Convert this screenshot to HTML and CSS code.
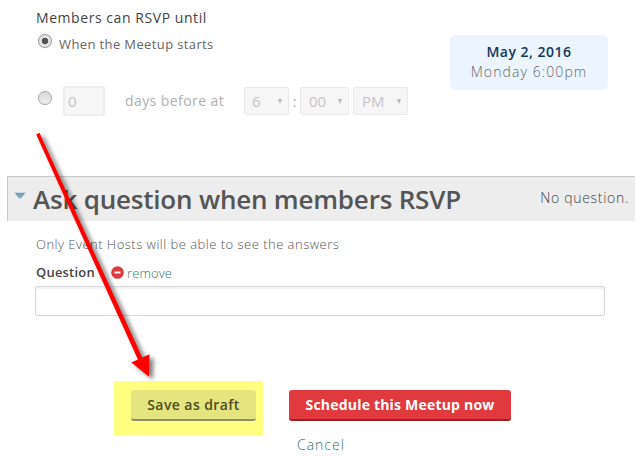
FILE: index.html
```html
<!DOCTYPE html>
<html lang="en">
<head>
<meta charset="utf-8">
<title>Schedule a Meetup</title>
<link rel="stylesheet" href="styles.css">
</head>
<body>
<main class="page">
  <section class="rsvp">
    <div class="deadline">
      <h2 class="label"><span class="t-members">Members can RSVP until</span></h2>
      <div class="option option-start"><span class="radio checked"></span><span class="t-when">When the Meetup starts</span></div>
      <div class="option option-days">
        <span class="radio"></span>
        <span class="field days">0</span>
        <span class="t-days">days before at</span>
        <span class="field hour">6<i class="caret"></i></span>
        <span class="colon">:</span>
        <span class="field minute">00<i class="caret"></i></span>
        <span class="field period">PM<i class="caret"></i></span>
      </div>
    </div>
    <aside class="date"><strong>May 2, 2016</strong><span>Monday 6:00pm</span></aside>
  </section>
  <header class="bar">
    <svg class="toggle" width="12" height="8" viewBox="0 0 12 8"><defs><linearGradient id="g" x2="0" y2="1"><stop offset="0" stop-color="#699bb9"/><stop offset="1" stop-color="#8fb3cb"/></linearGradient></defs><path d="M.5 .8h11L7 6.5H5z" fill="url(#g)"/></svg>
    <h1>Ask question when members RSVP</h1>
    <span class="status">No question.</span>
  </header>
  <section class="question">
    <p class="hint">Only Event Hosts will be able to see the answers</p>
    <div class="question-label">
      <b>Question</b>
      <svg width="13" height="13" viewBox="0 0 13 13"><circle cx="6.5" cy="6.5" r="6.3" fill="#e0393e"/><path d="M3.5 5.5h6v2h-6z" fill="#fff"/></svg>
      <a>remove</a>
    </div>
    <div class="answer"></div>
  </section>
  <footer class="actions">
    <div class="highlight"><span class="button draft">Save as draft</span></div>
    <div class="submit"><span class="button schedule">Schedule this Meetup now</span><a class="cancel">Cancel</a></div>
  </footer>
  <svg class="arrow" width="640" height="463" viewBox="0 0 640 463"><path d="M39.5 132.8L36.2 134.4L137.9 359.6L131.3 362.6L149 376.8L149.5 354.3L142.3 357.6Z" fill="#f00"/></svg>
</main>
</body>
</html>
```
FILE: styles.css
```css
* { box-sizing: border-box; }
body { margin: 0; background: #fff; color: #666; font-family: "Open Sans", "Noto Sans", sans-serif; font-size: 14px; font-weight: 300; }
h1, h2, p { margin: 0; }
.page { position: relative; width: 640px; height: 463px; overflow: hidden; white-space: nowrap; }
.rsvp { display: flex; justify-content: space-between; height: 176px; padding: 8px 32px 0 36px; }
.label { height: 20px; line-height: 20px; font-size: 14px; font-weight: 400; letter-spacing: .56px; color: #444; }
.option { display: flex; align-items: center; }
.option-start { height: 32px; }
.option-days { height: 30px; margin-top: 26px; color: #b0b0b0; font-weight: 400; }
.radio { width: 14px; height: 14px; border: 1px solid #aaa; border-radius: 50%; background: linear-gradient(#d8d8d8, #eee); box-shadow: 0 0 1px #ccc; }
.option-start .radio { margin: 0 7px 6px 2px; }
.option-days .radio { margin: 0 11px 6px 2px; }
.radio.checked { border-color: #999; background: radial-gradient(circle, #555 0 3px, #e5e5e5 3.6px); }
.t-when { font-size: 13px; font-weight: 400; letter-spacing: .38px; }
.field { display: flex; align-items: center; justify-content: space-between; height: 28px; border: 1px solid #e9e9e9; border-radius: 2px; background: #f6f6f6; color: #c4c4c4; font-size: 15px; }
.days { width: 42px; height: 30px; padding-left: 4px; margin-right: 20px; border-width: 2px; border-color: #eee; padding-left: 3px; }
.hour { width: 45px; padding: 0 6px 0 7px; }
.minute { width: 49px; padding: 0 6px 0 8px; margin-right: 4px; }
.period { width: 55px; padding: 0 6px 0 8px; }
.colon { width: 11px; text-align: center; }
.t-days { width: 119px; margin-top: -2px; letter-spacing: .42px; }
.caret { border: solid transparent; border-width: 5px 2.5px 0; border-top-color: #b8b8b8; }
.date { display: flex; flex-direction: column; align-items: center; width: 158px; height: 55px; margin-top: 27px; padding-top: 7px; border-radius: 5px; background: #ecf5ff; line-height: 20px; color: #666; }
.date strong { color: #12375c; font-weight: 600; letter-spacing: .5px; }
.date span { letter-spacing: 1.1px; }
.bar { display: flex; align-items: center; width: 628px; height: 45px; margin-left: 7px; padding: 0 6px; border: solid #c8c8c8; border-width: 1px 0 0 1px; background: #ededed; }
.toggle { margin: 0 7px 7px 0; }
.bar h1 { flex: 1; font-size: 26px; font-weight: 600; line-height: 44px; letter-spacing: -.2px; color: #555; }
.status { margin-top: -3px; letter-spacing: .7px; color: #444; }
.question { padding: 14px 35px 0; }
.hint { height: 19px; line-height: 19px; padding-left: 1px; font-size: 13px; letter-spacing: .48px; color: #555; }
.question-label { display: flex; align-items: center; height: 19px; margin: 9px 0 4px; padding-left: 1px; font-size: 13px; }
.question-label b { width: 75px; margin-top: -2px; font-weight: 600; letter-spacing: .2px; color: #444; }
.question-label a { margin-left: 3px; letter-spacing: .1px; color: #317865; }
.answer { height: 30px; width: 570px; border: 1px solid #d8d8d8; border-radius: 2px; box-shadow: inset 0 2px 2px #f1f1f1; }
.actions { display: flex; padding: 65px 0 0 114px; }
.highlight { width: 149px; height: 54px; padding: 9px 7px 0 17px; background: #ffff80; }
.button { display: block; height: 31px; line-height: 29px; border-radius: 3px; text-align: center; font-weight: 600; }
.draft { width: 125px; background: #e5e580; color: #4c4c20; border-bottom: 2px solid #8b8b70; letter-spacing: .42px; }
.submit { margin: 9px 0 0 26px; }
.schedule { width: 222px; background: #e0393e; color: #fff; border-bottom: 2px solid #982126; font-weight: 700; letter-spacing: .2px; }
.cancel { display: block; margin-left: 8px; line-height: 20px; padding-top: 14px; letter-spacing: 1px; color: #317865; }
.arrow { position: absolute; left: 0; top: 0; filter: drop-shadow(4px 3px 2px rgba(0, 0, 0, .5)); }
```
